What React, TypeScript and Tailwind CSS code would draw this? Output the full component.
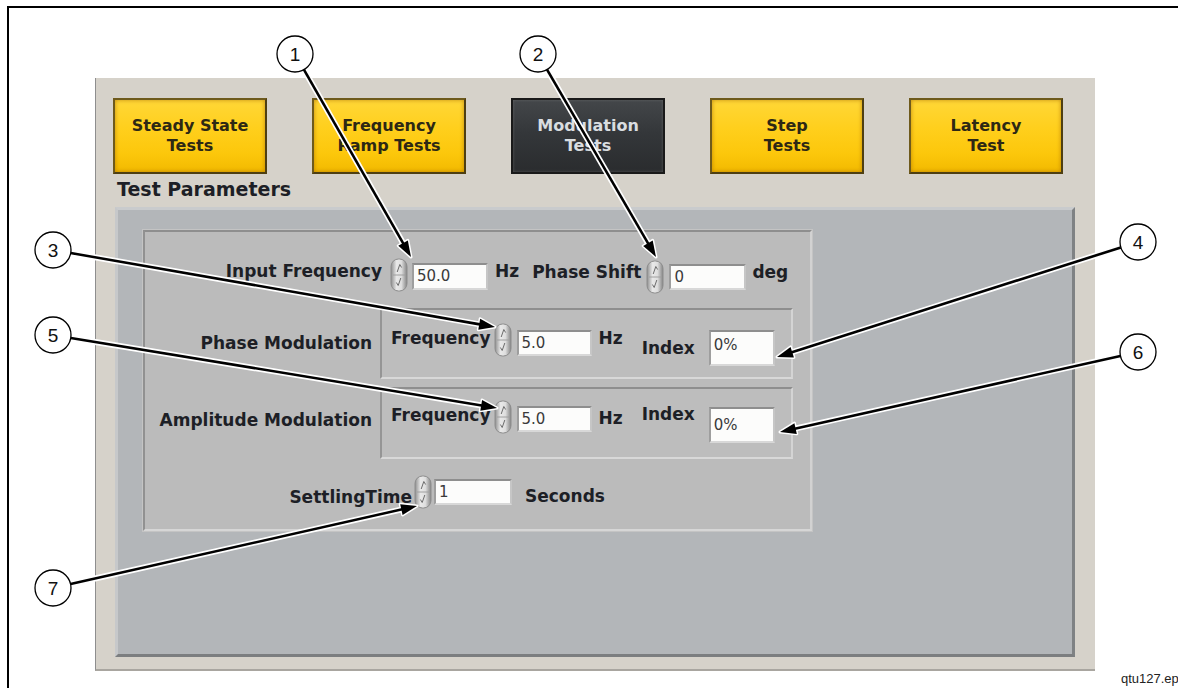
import React from "react";

const LBL = "font-['DejaVu_Sans',Verdana,sans-serif] font-bold text-[17px] leading-[20px] text-[#1d1f26] whitespace-nowrap";

function Spin({ className }: { className: string }) {
  return (
    <svg width="18" height="34" viewBox="0 0 18 34" className={className}>
      <defs>
        <linearGradient id="spg" x1="0" x2="1" y1="0" y2="0">
          <stop offset="0" stopColor="#8f8f8f" />
          <stop offset="0.35" stopColor="#e9e9e9" />
          <stop offset="0.65" stopColor="#dedede" />
          <stop offset="1" stopColor="#858585" />
        </linearGradient>
      </defs>
      <rect x="1" y="1" width="16" height="32" rx="7.5" fill="url(#spg)" stroke="#8c8c8c" />
      <line x1="3" y1="17" x2="15" y2="17" stroke="#a0a0a0" />
      <path d="M9.8 6.5 L7.2 14 M9.8 6.5 L11.6 9.5" stroke="#6c6c6c" fill="none" strokeWidth="1" />
      <path d="M8.2 27.5 L10.8 20 M8.2 27.5 L6.4 24.5" stroke="#6c6c6c" fill="none" strokeWidth="1" />
    </svg>
  );
}

function Field({ value, className }: { value: string; className: string }) {
  return (
    <div
      className={`bg-[#fcfcfb] border-2 border-t-[#8e8e8e] border-l-[#9e9e9e] border-b-[#d8d8d8] border-r-[#c6c6c6] flex pl-[3px] text-[15px] text-[#3a3a3a] font-['DejaVu_Sans',Verdana,sans-serif] ${className}`}
    >
      {value}
    </div>
  );
}

function Tab({ l1, l2, dark }: { l1: string; l2: string; dark?: boolean }) {
  return (
    <div
      className={
        dark
          ? "w-[154px] h-[76px] border-2 border-[#1a1a1a] bg-[linear-gradient(180deg,#44474a_0%,#34373a_45%,#2a2c2e_100%)] shadow-[inset_0_0_3px_rgba(120,120,120,0.6)] flex flex-col items-center justify-center text-[#d9dde0] font-['DejaVu_Sans',Verdana,sans-serif] font-bold text-[16px] leading-[20px]"
          : "w-[154px] h-[76px] border-2 border-[#4e3f12] border-t-[#6e5a1c] border-l-[#6e5a1c] bg-[linear-gradient(180deg,#ffd737_0%,#ffcf1c_40%,#fcc70b_75%,#f2b900_100%)] shadow-[inset_0_0_4px_rgba(170,110,0,0.7)] flex flex-col items-center justify-center text-[#2d2814] font-['DejaVu_Sans',Verdana,sans-serif] font-bold text-[16px] leading-[20px]"
      }
    >
      <span>{l1}</span>
      <span>{l2}</span>
    </div>
  );
}

type Call = { n: string; c: [number, number]; t: [number, number] };
const calls: Call[] = [
  { n: "1", c: [295, 54], t: [411, 257] },
  { n: "2", c: [538, 54], t: [656, 257] },
  { n: "3", c: [53, 250], t: [495, 327] },
  { n: "4", c: [1138, 242], t: [777, 357] },
  { n: "5", c: [53, 335], t: [497, 408] },
  { n: "6", c: [1138, 352], t: [780, 432] },
  { n: "7", c: [53, 588], t: [417, 506] },
];

function Callouts() {
  const r = 18;
  return (
    <svg className="absolute left-0 top-0 pointer-events-none" width="1178" height="688" viewBox="0 0 1178 688">
      {calls.map((k) => {
        const dx = k.t[0] - k.c[0];
        const dy = k.t[1] - k.c[1];
        const len = Math.hypot(dx, dy);
        const ux = dx / len;
        const uy = dy / len;
        const sx = k.c[0] + ux * r;
        const sy = k.c[1] + uy * r;
        const bx = k.t[0] - ux * 16;
        const by = k.t[1] - uy * 16;
        const px = -uy * 5.5;
        const py = ux * 5.5;
        const pts = `${k.t[0]},${k.t[1]} ${bx + px},${by + py} ${bx - px},${by - py}`;
        return (
          <g key={k.n}>
            <line x1={sx} y1={sy} x2={bx + ux * 2} y2={by + uy * 2} stroke="#ffffff" strokeWidth="6" />
            <polygon points={pts} fill="#ffffff" stroke="#ffffff" strokeWidth="3" strokeLinejoin="round" />
            <line x1={sx} y1={sy} x2={bx + ux * 2} y2={by + uy * 2} stroke="#000000" strokeWidth="2.6" />
            <polygon points={pts} fill="#000000" />
            <circle cx={k.c[0]} cy={k.c[1]} r={r} fill="#ffffff" stroke="#000000" strokeWidth="1.3" />
            <text
              x={k.c[0]}
              y={k.c[1] + 6.5}
              textAnchor="middle"
              fontSize="19"
              fontFamily="'Liberation Sans', Arial, sans-serif"
              fill="#111"
            >
              {k.n}
            </text>
          </g>
        );
      })}
    </svg>
  );
}

export default function App() {
  return (
    <div className="relative w-[1178px] h-[688px] bg-white overflow-hidden">
      <div className="pt-[6px] pl-[7px] h-full">
        <div className="h-full border-t-2 border-l-2 border-black pl-[86px] pt-[70px]">
          {/* LabVIEW front panel */}
          <div className="w-[1000px] h-[593px] bg-[#d6d2ca] border-l border-l-[#8e8e8e] border-b-2 border-b-[#a9a6a0] pl-[17px] pt-[20px]">
            <div className="flex gap-[45px]">
              <Tab l1="Steady State" l2="Tests" />
              <Tab l1="Frequency" l2="Ramp Tests" />
              <Tab l1="Modulation" l2="Tests" dark />
              <Tab l1="Step" l2="Tests" />
              <Tab l1="Latency" l2="Test" />
            </div>
            <div className="mt-[6px] ml-[4px] h-[19px] font-['DejaVu_Sans',Verdana,sans-serif] font-bold text-[19px] leading-[19px] text-[#1d1f26]">
              Test Parameters
            </div>
            {/* gray panel */}
            <div className="mt-[8px] ml-[2px] w-[960px] h-[450px] bg-[#b3b6b9] border-[3px] border-t-[#c9cbcd] border-l-[#c6c8ca] border-r-[#7f8284] border-b-[#7c7e80] pl-[25px] pt-[20px]">
              {/* group box */}
              <div className="w-[669px] h-[301px] bg-[#bbbbbb] border-2 border-t-[#8e8e8e] border-l-[#919191] border-b-[#d6d6d6] border-r-[#d2d2d2] shadow-[0_0_0_1px_#c4c4c4] flex flex-col">
                {/* row 1 */}
                <div className="h-[76px] flex items-start">
                  <div className={`w-[237px] text-right mt-[29px] ${LBL}`}>Input Frequency</div>
                  <Spin className="ml-[8px] mt-[26px] shrink-0" />
                  <Field value="50.0" className="ml-[4px] mt-[31px] w-[76px] h-[27px] items-center" />
                  <div className={`ml-[7px] mt-[29px] ${LBL}`}>Hz</div>
                  <div className={`ml-[13px] mt-[30px] ${LBL}`}>Phase Shift</div>
                  <Spin className="ml-[5px] mt-[28px] shrink-0" />
                  <Field value="0" className="ml-[5px] mt-[32px] w-[77px] h-[26px] items-center" />
                  <div className={`ml-[6px] mt-[30px] ${LBL}`}>deg</div>
                </div>
                {/* row 2 */}
                <div className="h-[71px] flex items-start">
                  <div className={`w-[227px] text-right mt-[25px] ${LBL}`}>Phase Modulation</div>
                  <div className="ml-[8px] w-[413px] h-[71px] bg-[#bdbdbd] border-2 border-t-[#8e8e8e] border-l-[#959595] border-b-[#d8d8d8] border-r-[#d4d4d4] flex items-start">
                    <div className={`ml-[9px] mt-[18px] ${LBL}`}>Frequency</div>
                    <Spin className="ml-[3px] mt-[13px] shrink-0" />
                    <Field value="5.0" className="ml-[5px] mt-[20px] w-[75px] h-[26px] items-center" />
                    <div className={`ml-[7px] mt-[18px] ${LBL}`}>Hz</div>
                    <div className={`ml-[19px] mt-[28px] ${LBL}`}>Index</div>
                    <Field value="0%" className="ml-[14px] mt-[20px] w-[66px] h-[36px] items-start pt-[2px]" />
                  </div>
                </div>
                {/* row 3 */}
                <div className="mt-[8px] h-[72px] flex items-start">
                  <div className={`w-[227px] text-right mt-[23px] ${LBL}`}>Amplitude Modulation</div>
                  <div className="ml-[8px] w-[413px] h-[72px] bg-[#bdbdbd] border-2 border-t-[#8e8e8e] border-l-[#959595] border-b-[#d8d8d8] border-r-[#d4d4d4] flex items-start">
                    <div className={`ml-[9px] mt-[16px] ${LBL}`}>Frequency</div>
                    <Spin className="ml-[3px] mt-[11px] shrink-0" />
                    <Field value="5.0" className="ml-[5px] mt-[17px] w-[75px] h-[26px] items-center" />
                    <div className={`ml-[7px] mt-[19px] ${LBL}`}>Hz</div>
                    <div className={`ml-[19px] mt-[15px] ${LBL}`}>Index</div>
                    <Field value="0%" className="ml-[14px] mt-[18px] w-[66px] h-[36px] items-center" />
                  </div>
                </div>
                {/* row 4 */}
                <div className="h-[70px] flex items-start">
                  <div className={`w-[267px] text-right mt-[28px] ${LBL}`}>SettlingTime</div>
                  <Spin className="ml-[2px] mt-[16px] shrink-0" />
                  <Field value="1" className="ml-[2px] mt-[20px] w-[78px] h-[26px] items-center" />
                  <div className={`ml-[13px] mt-[27px] ${LBL}`}>Seconds</div>
                </div>
              </div>
            </div>
          </div>
        </div>
      </div>
      <Callouts />
      <div className="absolute left-[1121px] top-[672px] text-[13px] leading-[14px] text-[#222] font-['Liberation_Sans_Narrow','Liberation_Sans',Arial,sans-serif] whitespace-nowrap">
        qtu127.eps
      </div>
    </div>
  );
}
